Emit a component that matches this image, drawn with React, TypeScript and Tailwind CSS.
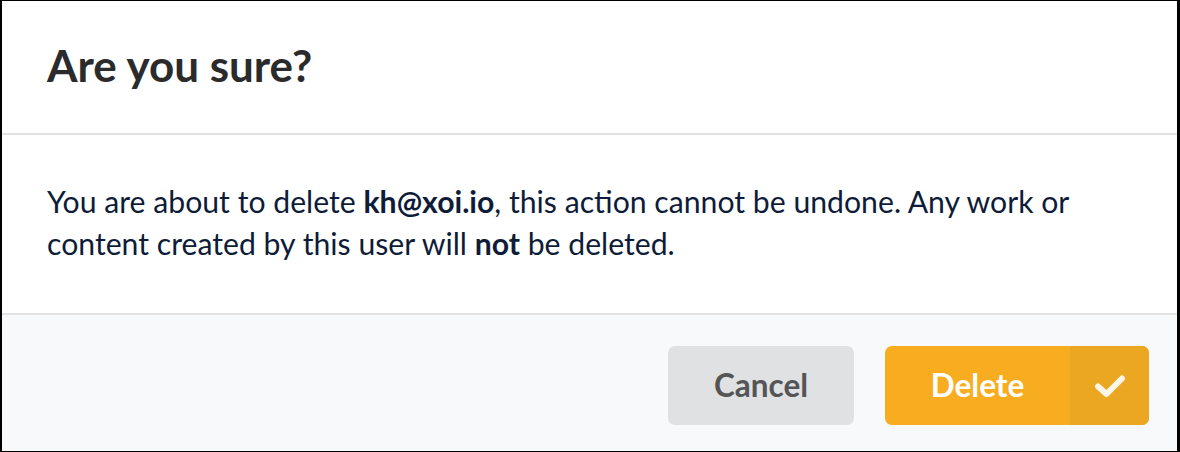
import React from "react";

export default function App() {
  return (
    <div
      className="w-[1180px] h-[452px] bg-white border-black border-l-2 border-t border-r-[3px] border-b flex flex-col overflow-hidden"
      style={{ fontFamily: "Lato, 'Open Sans', sans-serif" }}
    >
      <div className="h-[134px] shrink-0 pl-[45px] pt-[38px] border-b-2 border-[#e2e2e2]">
        <h1 className="text-[44px] leading-[1.2] font-bold text-[#2b2b2b]">Are you sure?</h1>
      </div>
      <div className="h-[180px] shrink-0 pl-[45px] pt-[45px] border-b-2 border-[#e2e2e2]">
        <p className="w-[1080px] text-[30.2px] leading-[42px] text-[#0e1c38]">
          You are about to delete <span className="font-bold">kh@xoi.io</span>, this action cannot be undone. Any work or
          content created by this user will <span className="font-bold">not</span> be deleted.
        </p>
      </div>
      <div className="flex-1 bg-[#f8f9fa] flex justify-end items-start pt-[31px] pr-[28px] gap-[31px]">
        <button className="w-[186px] h-[79px] rounded-[7px] bg-[#e0e1e3] text-[#555555] text-[31.5px] font-bold flex items-center justify-center">
          Cancel
        </button>
        <button className="h-[79px] rounded-[7px] bg-[#f8ad20] flex overflow-hidden">
          <span className="w-[185px] h-full flex items-center justify-center text-white text-[31.5px] font-bold">
            Delete
          </span>
          <span className="w-[79px] h-full bg-[#eba622] flex items-center justify-center">
            <svg width="32" height="24" viewBox="0 0 32 24" fill="none">
              <polyline
                points="4,12.5 12.5,20 28,4.5"
                stroke="#fdf6e6"
                strokeWidth="6"
                strokeLinecap="round"
                strokeLinejoin="round"
              />
            </svg>
          </span>
        </button>
      </div>
    </div>
  );
}
